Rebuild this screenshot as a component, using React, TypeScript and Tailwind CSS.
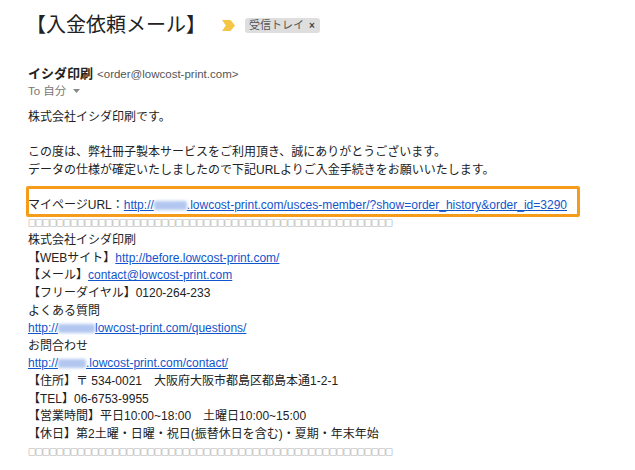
import React from 'react';

const LINK = 'text-[#1155cc] underline underline-offset-[1px]';

// ぼかし処理されたサブドメイン部分
const Smudge: React.FC<{ className: string }> = ({ className }) => (
  <span className={`inline-block h-[9px] align-[-1px] rounded-[2px] bg-[#9fb9ec] opacity-80 blur-[1.5px] ${className}`} />
);

const Line: React.FC<{ children?: React.ReactNode; className?: string }> = ({ children, className = '' }) => (
  <div className={`h-[17.6px] whitespace-nowrap ${className}`}>{children}</div>
);

const Tofu: React.FC = () => (
  <Line className="flex items-center">
    <span className="font-['Noto_Sans_CJK_JP',sans-serif] text-[8px] leading-[8px] tracking-[-1px] text-[#555]">
      {'□'.repeat(52)}
    </span>
  </Line>
);

const App: React.FC = () => {
  return (
    <div className="h-[470px] w-[635px] overflow-hidden bg-white font-['Liberation_Sans','Noto_Sans_CJK_JP',sans-serif] text-[#222]">
      <div className="mt-[11px] flex h-[28px] items-center pl-[26px]">
        <h1 className="text-[20px] font-normal leading-[28px] text-[#222]">【入金依頼メール】</h1>
        <svg className="ml-[16px]" width="13" height="11" viewBox="0 0 13 11">
          <path d="M0 0H8.5L13 5.5L8.5 11H0L3.8 5.5Z" fill="#f5c645" />
        </svg>
        <span className="ml-[10px] flex h-[15px] items-center rounded-[3px] bg-[#dedede] pl-[4px] pr-[5px] text-[11px] leading-[15px] text-[#555]">
          受信トレイ
          <span className="ml-[5px] text-[10px] font-bold text-[#444]">×</span>
        </span>
      </div>

      <div className="mt-[26px] pl-[28px]">
        <div className="flex h-[18px] items-baseline leading-[18px]">
          <span className="text-[13px] font-bold text-[#222]">イシダ印刷</span>
          <span className="ml-[4px] text-[11.5px] text-[#555]">&lt;order@lowcost-print.com&gt;</span>
        </div>
        <div className="flex h-[16px] items-center text-[11.5px] leading-[16px] text-[#777]">
          To 自分
          <svg className="ml-[7px]" width="7" height="4" viewBox="0 0 7 4">
            <path d="M0 0H7L3.5 4Z" fill="#888" />
          </svg>
        </div>
      </div>

      <div className="mt-[10px] pl-[28px] text-[12px] leading-[17.6px]">
        <Line>株式会社イシダ印刷です。</Line>
        <Line />
        <Line>この度は、弊社冊子製本サービスをご利用頂き、誠にありがとうございます。</Line>
        <Line>データの仕様が確定いたしましたので下記URLよりご入金手続きをお願いいたします。</Line>
        <Line />
        <Line className="relative">
          マイページURL：
          <span className={LINK}>
            http://<Smudge className="w-[33px]" />.lowcost-print.com/usces-member/?show=order_history&amp;order_id=3290
          </span>
          <span className="pointer-events-none absolute left-[-2px] top-[-11px] h-[31px] w-[554px] rounded-[2px] border-[3px] border-[#f59c1a]" />
        </Line>
        <Tofu />
        <Line>株式会社イシダ印刷</Line>
        <Line>
          【WEBサイト】<span className={LINK}>http://before.lowcost-print.com/</span>
        </Line>
        <Line>
          【メール】<span className={LINK}>contact@lowcost-print.com</span>
        </Line>
        <Line>【フリーダイヤル】0120-264-233</Line>
        <Line>よくある質問</Line>
        <Line>
          <span className={LINK}>
            http://<Smudge className="w-[37px]" />lowcost-print.com/questions/
          </span>
        </Line>
        <Line>お問合わせ</Line>
        <Line>
          <span className={LINK}>
            http://<Smudge className="w-[28px]" />.lowcost-print.com/contact/
          </span>
        </Line>
        <Line>【住所】〒 534-0021　大阪府大阪市都島区都島本通1-2-1</Line>
        <Line>【TEL】06-6753-9955</Line>
        <Line>【営業時間】平日10:00~18:00　土曜日10:00~15:00</Line>
        <Line>【休日】第2土曜・日曜・祝日(振替休日を含む)・夏期・年末年始</Line>
        <Tofu />
      </div>
    </div>
  );
};

export default App;
